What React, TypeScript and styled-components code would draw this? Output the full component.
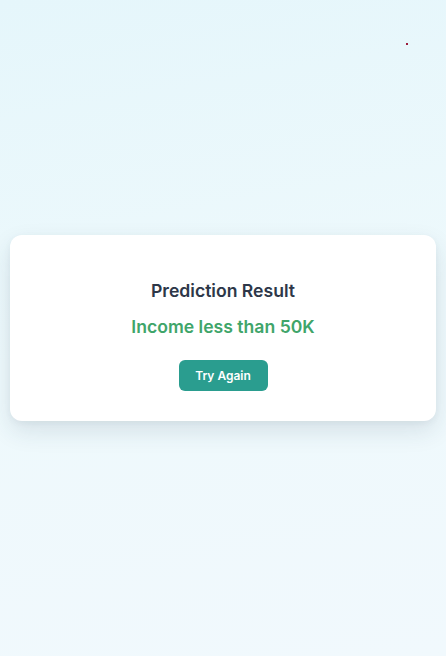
import React from "react";
import styled, { createGlobalStyle } from "styled-components";

const Global = createGlobalStyle`
  html, body { margin: 0; padding: 0; }
  body { font-family: Inter, "Noto Sans", sans-serif; }
  * { box-sizing: border-box; }
`;

const Page = styled.div`
  position: relative;
  min-height: 656px;
  display: flex;
  align-items: center;
  justify-content: center;
  padding: 0 10px;
  background: linear-gradient(170deg, #e5f6fb 0%, #eef9fc 50%, #f1f9fd 100%);
`;

const Dot = styled.span`
  position: absolute;
  top: 43px;
  left: 406px;
  width: 2px;
  height: 2px;
  background: #9b1b3a;
`;

const Card = styled.div`
  width: 100%;
  height: 186px;
  background: #ffffff;
  border-radius: 12px;
  box-shadow: 0 10px 25px rgba(30, 60, 80, 0.12), 0 2px 6px rgba(30, 60, 80, 0.05);
  display: flex;
  flex-direction: column;
  align-items: center;
  padding-top: 44px;
`;

const Title = styled.h2`
  margin: 0;
  font-size: 17.6px;
  line-height: 24px;
  font-weight: 600;
  color: #2d3748;
`;

const Result = styled.p`
  margin: 12px 0 0;
  font-size: 17.6px;
  line-height: 24px;
  font-weight: 600;
  color: #3fa56a;
`;

const Button = styled.button`
  margin-top: 21px;
  width: 89px;
  height: 31px;
  border: none;
  border-radius: 6px;
  background: #2a9d8f;
  color: #ffffff;
  font-family: Inter, sans-serif;
  font-size: 12px;
  font-weight: 600;
  cursor: pointer;
`;

export default function App() {
  return (
    <>
      <Global />
      <Page>
        <Dot />
        <Card>
          <Title>Prediction Result</Title>
          <Result>Income less than 50K</Result>
          <Button>Try Again</Button>
        </Card>
      </Page>
    </>
  );
}
